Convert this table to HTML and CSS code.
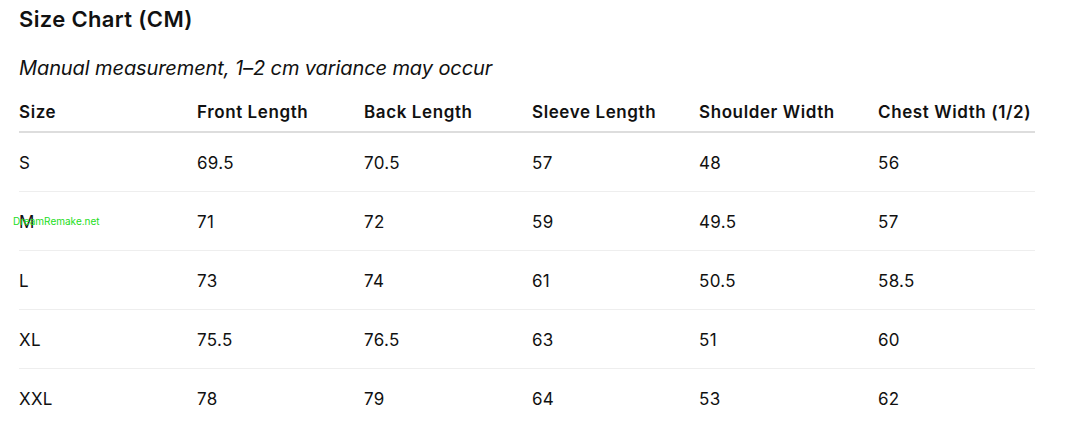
FILE: index.html
```html
<!DOCTYPE html>
<html lang="en">
<head>
<meta charset="utf-8">
<title>Size Chart</title>
<link rel="stylesheet" href="styles.css">
</head>
<body>
<div class="chart">
  <h2 class="title">Size Chart (CM)</h2>
  <p class="note">Manual measurement, 1–2 cm variance may occur</p>
  <table class="sizes">
    <colgroup>
      <col class="c1"><col class="c2"><col class="c3"><col class="c4"><col class="c5"><col class="c6">
    </colgroup>
    <thead>
      <tr><th>Size</th><th>Front Length</th><th>Back Length</th><th>Sleeve Length</th><th>Shoulder Width</th><th>Chest Width (1/2)</th></tr>
    </thead>
    <tbody>
      <tr><td>S</td><td>69.5</td><td>70.5</td><td>57</td><td>48</td><td>56</td></tr>
      <tr><td class="wm-cell">M<span class="watermark">DreamRemake.net</span></td><td>71</td><td>72</td><td>59</td><td>49.5</td><td>57</td></tr>
      <tr><td>L</td><td>73</td><td>74</td><td>61</td><td>50.5</td><td>58.5</td></tr>
      <tr><td>XL</td><td>75.5</td><td>76.5</td><td>63</td><td>51</td><td>60</td></tr>
      <tr><td>XXL</td><td>78</td><td>79</td><td>64</td><td>53</td><td>62</td></tr>
    </tbody>
  </table>
</div>
</body>
</html>
```
FILE: styles.css
```css
html, body {
  margin: 0;
  padding: 0;
  background: #ffffff;
}
body {
  font-family: Inter, "Noto Sans", "Liberation Sans", sans-serif;
  color: #111111;
}
.chart {
  width: 1016px;
  padding: 5px 19px 0;
}
.title {
  margin: 0;
  font-size: 22px;
  line-height: 28px;
  font-weight: 600;
  letter-spacing: 0.35px;
}
.note {
  margin: 21px 0 0;
  font-size: 20px;
  line-height: 28px;
  font-style: italic;
  letter-spacing: -0.1px;
}
.sizes {
  margin-top: 10px;
  width: 1016px;
  border-collapse: collapse;
  table-layout: fixed;
}
.c1 { width: 178px; }
.c2 { width: 167px; }
.c3 { width: 168px; }
.c4 { width: 167px; }
.c5 { width: 179px; }
.c6 { width: 157px; }
.sizes th {
  text-align: left;
  font-size: 17px;
  line-height: 24px;
  font-weight: 600;
  letter-spacing: 0.6px;
  padding: 8px 0 7px;
  border-bottom: 2px solid #dddddd;
  white-space: nowrap;
}
.sizes td {
  font-size: 17px;
  line-height: 24px;
  letter-spacing: 0.3px;
  padding: 18px 0 16px;
  border-bottom: 1px solid #eeeeee;
}
.sizes tbody tr:last-child td {
  border-bottom: none;
}
.wm-cell {
  position: relative;
}
.watermark {
  position: absolute;
  left: -6px;
  top: 23px;
  font-size: 10px;
  line-height: 12px;
  letter-spacing: 0;
  color: #22dd22;
  white-space: nowrap;
}
```
